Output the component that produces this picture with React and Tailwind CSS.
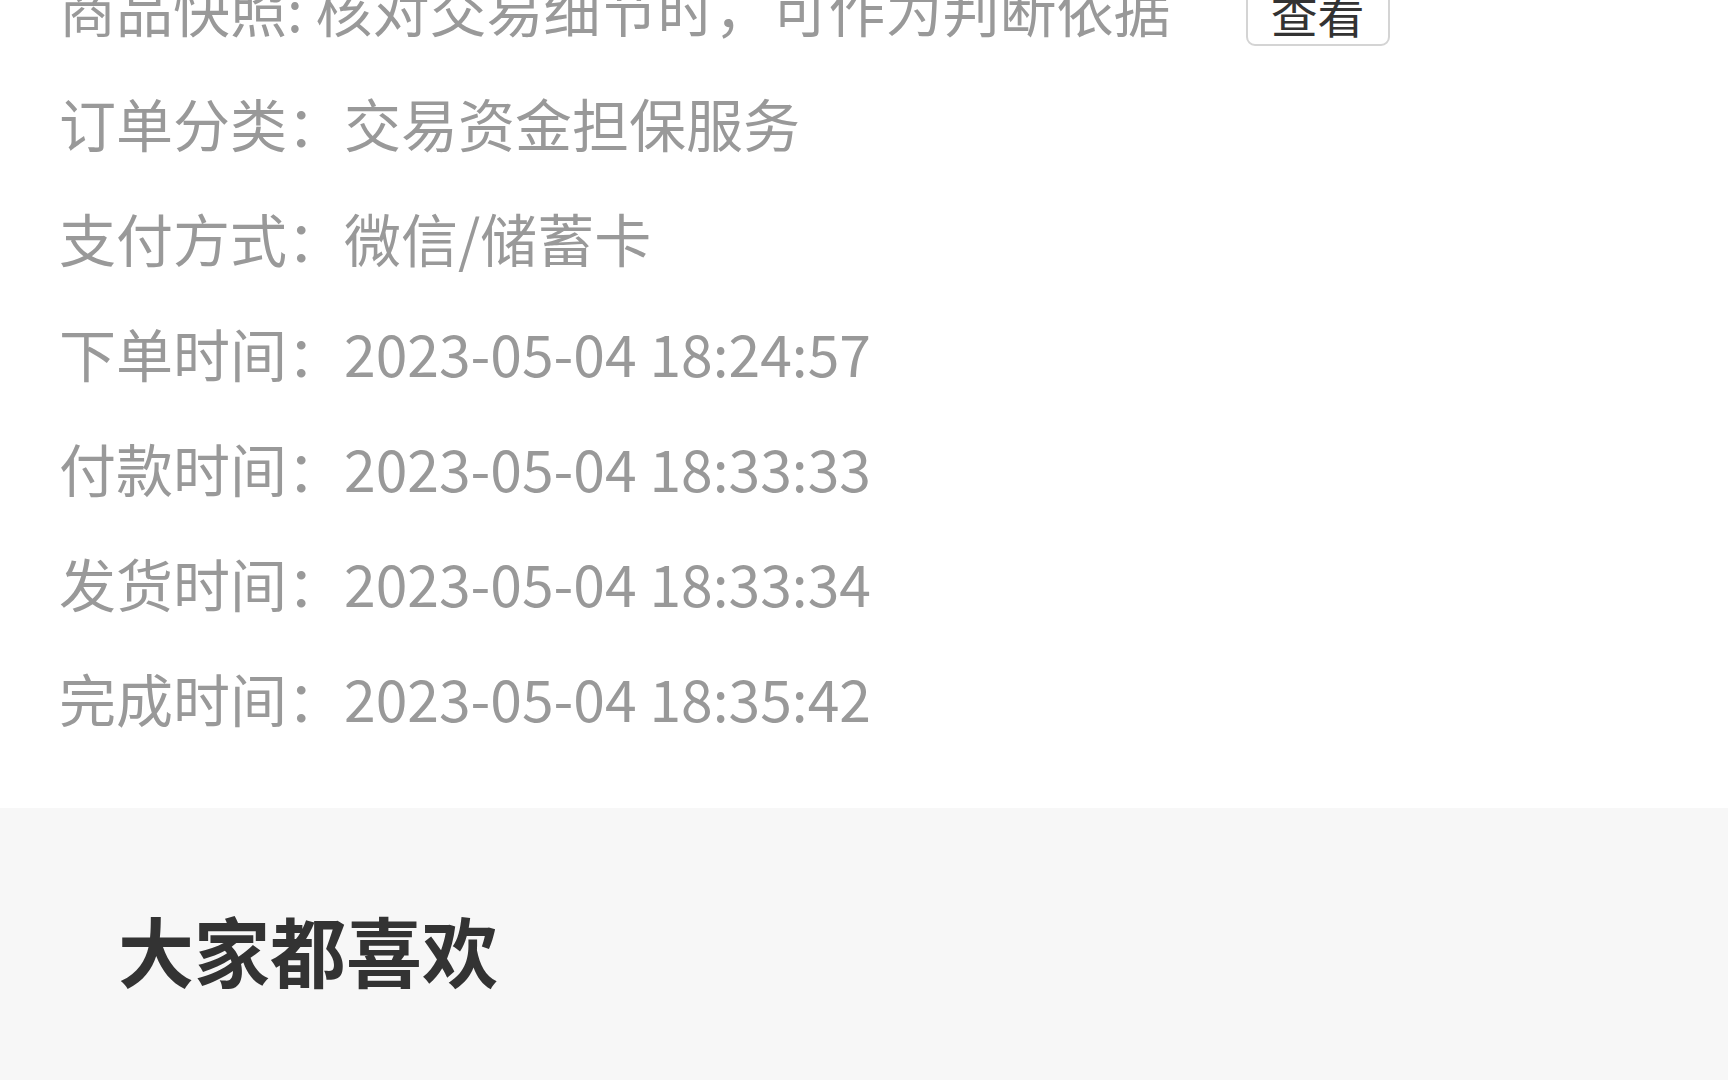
const rows = [
    ['订单分类：', '交易资金担保服务'],
    ['支付方式：', '微信/储蓄卡'],
    ['下单时间：', '2023-05-04 18:24:57'],
    ['付款时间：', '2023-05-04 18:33:33'],
    ['发货时间：', '2023-05-04 18:33:34'],
    ['完成时间：', '2023-05-04 18:35:42'],
]

const App = () => {
    return (
        <div
            className="min-h-screen overflow-hidden bg-[#f7f7f7]"
            style={{ fontFamily: '"Noto Sans CJK SC", "Noto Sans", sans-serif' }}
        >
            <div className="bg-white pl-[59px] pb-[53px]">
                <div className="-mt-[50px]">
                    {/* snapshot row, scrolled partly out of view */}
                    <div className="flex h-[115px] items-center text-[57px] text-[#999999]">
                        <span className="whitespace-nowrap">商品快照: 核对交易细节时，可作为判断依据</span>
                        <button className="ml-[75px] mt-[10px] h-[66px] rounded-[9px] border-2 border-[#d4d4d4] bg-white px-[23px] text-[47px] leading-none text-[#333333]">
                            查看
                        </button>
                    </div>
                    {rows.map(([label, value]) => (
                        <div key={label} className="flex h-[115px] items-center text-[57px] text-[#999999]">
                            <span className="whitespace-nowrap">{label}</span>
                            <span className="whitespace-nowrap">{value}</span>
                        </div>
                    ))}
                </div>
            </div>

            <div className="pl-[118px] pt-[96px]">
                <h2 className="text-[76px] font-semibold leading-[90px] text-[#333333]">大家都喜欢</h2>
            </div>
        </div>
    )
}

export default App
